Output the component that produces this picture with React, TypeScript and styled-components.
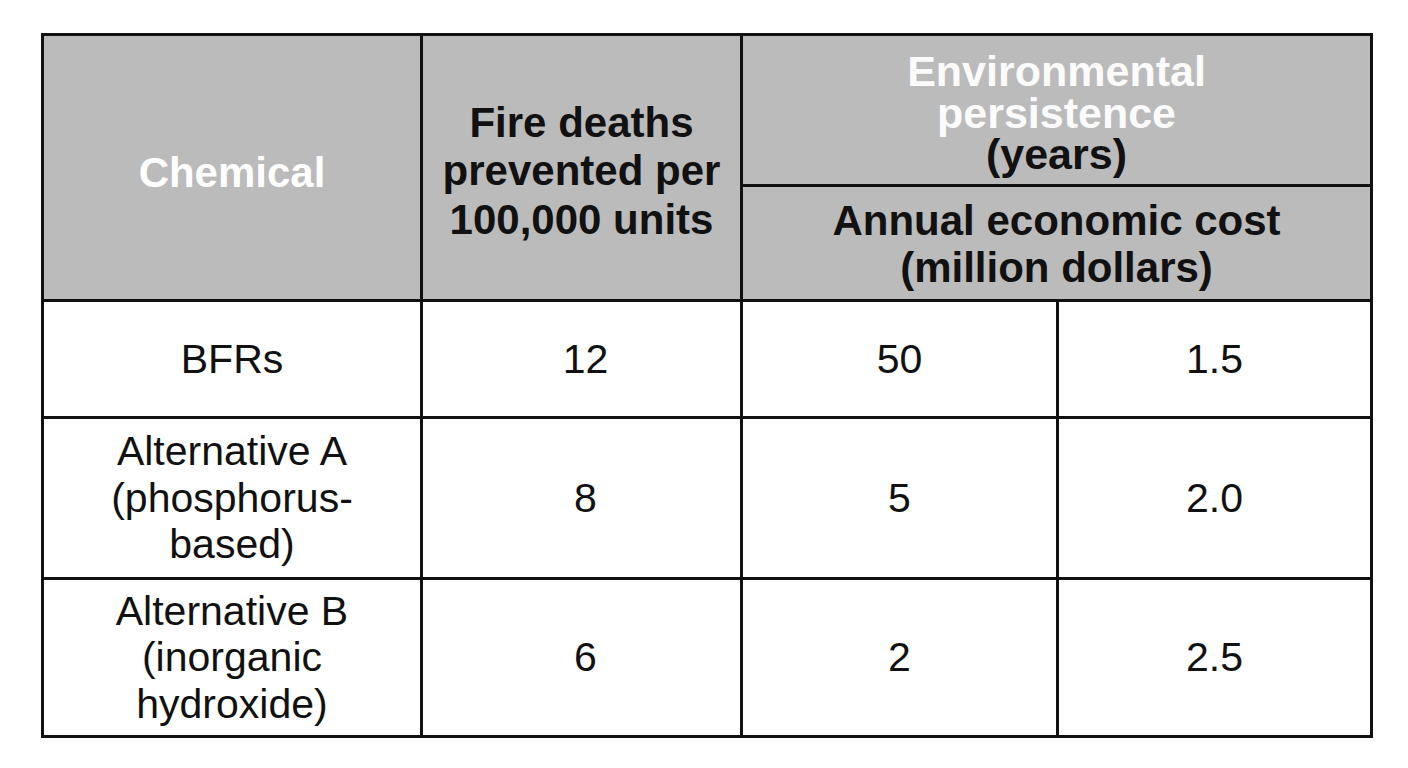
import React from "react";
import styled, { createGlobalStyle } from "styled-components";

const GlobalStyle = createGlobalStyle`
  html, body {
    margin: 0;
    padding: 0;
    background: #ffffff;
  }
  body {
    font-family: "Liberation Sans", Arial, Helvetica, sans-serif;
    color: #111111;
  }
`;

const Page = styled.div`
  width: 1408px;
  height: 768px;
  padding: 33px 0 0 41px;
  box-sizing: border-box;
`;

const Table = styled.div`
  display: grid;
  grid-template-columns: 376px 317px 313px 311px;
  grid-template-rows: 148px 112px 114px 158px 155px;
  gap: 3px;
  padding: 3px;
  background: #111111;
  width: max-content;
`;

const HeadCell = styled.div<{ $col?: string; $row?: string; $lh: number; $pad?: number; $white?: boolean }>`
  grid-column: ${(p) => p.$col ?? "auto"};
  grid-row: ${(p) => p.$row ?? "auto"};
  background: #bbbbbb;
  display: flex;
  align-items: center;
  justify-content: center;
  text-align: center;
  font-size: 42px;
  font-weight: 700;
  line-height: ${(p) => p.$lh}px;
  padding-top: ${(p) => p.$pad ?? 0}px;
  color: ${(p) => (p.$white ? "#ffffff" : "#111111")};
  box-sizing: border-box;
`;

const TopHeadCell = styled(HeadCell)`
  align-items: flex-start;
  font-size: 43px;
`;

const WhiteText = styled.span`
  color: #fbfbfb;
`;

const BodyCell = styled.div<{ $shift?: number }>`
  background: #ffffff;
  display: flex;
  align-items: center;
  justify-content: center;
  text-align: center;
  font-size: 41px;
  font-weight: 400;
  line-height: 46.5px;
  color: #111111;
  padding-left: ${(p) => p.$shift ?? 0}px;
`;

type Row = { name: React.ReactNode; deaths: string; persistence: string; cost: string };

const rows: Row[] = [
  { name: "BFRs", deaths: "12", persistence: "50", cost: "1.5" },
  {
    name: (
      <>
        Alternative A<br />(phosphorus-
        <br />
        based)
      </>
    ),
    deaths: "8",
    persistence: "5",
    cost: "2.0",
  },
  {
    name: (
      <>
        Alternative B<br />
        (inorganic
        <br />
        hydroxide)
      </>
    ),
    deaths: "6",
    persistence: "2",
    cost: "2.5",
  },
];

export default function App() {
  return (
    <>
      <GlobalStyle />
      <Page>
        <Table>
          <HeadCell $col="1" $row="1 / span 2" $lh={48} $pad={10} $white>
            Chemical
          </HeadCell>
          <HeadCell $col="2" $row="1 / span 2" $lh={48.5} $pad={8}>
            Fire deaths
            <br />
            prevented per
            <br />
            100,000 units
          </HeadCell>
          <TopHeadCell $col="3 / span 2" $row="1" $lh={41.5} $pad={15}>
            <div>
              <WhiteText>
                Environmental
                <br />
                persistence
              </WhiteText>
              <br />
              (years)
            </div>
          </TopHeadCell>
          <HeadCell $col="3 / span 2" $row="2" $lh={47} $pad={2}>
            Annual economic cost
            <br />
            (million dollars)
          </HeadCell>
          {rows.map((r, i) => (
            <React.Fragment key={i}>
              <BodyCell>
                <div>{r.name}</div>
              </BodyCell>
              <BodyCell $shift={8}>{r.deaths}</BodyCell>
              <BodyCell>{r.persistence}</BodyCell>
              <BodyCell>{r.cost}</BodyCell>
            </React.Fragment>
          ))}
        </Table>
      </Page>
    </>
  );
}
